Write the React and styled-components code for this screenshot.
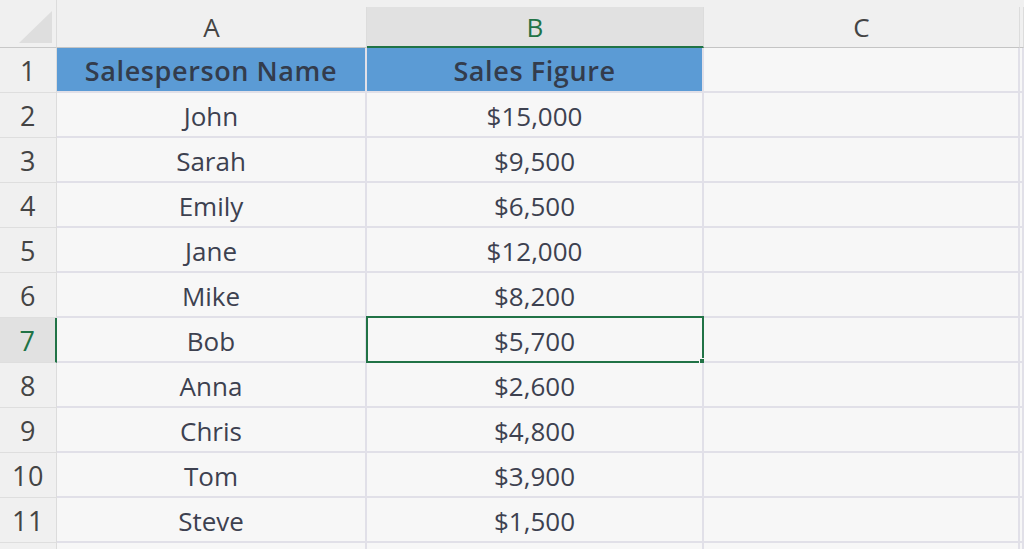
import React from 'react';
import styled, { createGlobalStyle } from 'styled-components';

const Global = createGlobalStyle`
  html, body {
    margin: 0;
    padding: 0;
    background: #f0f0f0;
  }
  body {
    font-family: "Open Sans", "Noto Sans", "Liberation Sans", sans-serif;
  }
`;

const Sheet = styled.div`
  width: 1024px;
  height: 549px;
  overflow: hidden;
  background: #f0f0f0;
  padding-top: 7px;
  box-sizing: border-box;
`;

const Grid = styled.div`
  display: grid;
  grid-template-columns: 57px 310px 337px 316px 1fr;
  grid-auto-rows: 45px;
  grid-template-rows: 41px;
`;

const Corner = styled.div`
  position: relative;
  background: #f0f0f0;
  border-right: 1px solid #dcdcdc;
  border-bottom: 1px solid #c8c8c8;
  margin-top: -7px;
  height: 48px;
  box-sizing: border-box;

  &::after {
    content: '';
    position: absolute;
    right: 4px;
    bottom: 4px;
    width: 0;
    height: 0;
    border-left: 33px solid transparent;
    border-bottom: 32px solid #dedede;
  }
`;

const ColHead = styled.div`
  display: flex;
  align-items: center;
  justify-content: center;
  box-sizing: border-box;
  font-size: 26px;
  background: ${p => (p.$active ? '#e1e1e1' : '#f0f0f0')};
  color: ${p => (p.$active ? '#217346' : '#444444')};
  border-right: 1px solid #dcdcdc;
  border-bottom: ${p => (p.$active ? '2px solid #217346' : '1px solid #c4c4c4')};
  padding-top: ${p => (p.$active ? '1px' : '0')};
`;

const RowHead = styled.div`
  display: flex;
  align-items: center;
  justify-content: center;
  box-sizing: border-box;
  font-size: 27px;
  letter-spacing: 0.5px;
  background: ${p => (p.$active ? '#e1e1e1' : '#f0f0f0')};
  color: ${p => (p.$active ? '#217346' : '#444444')};
  border-right: ${p => (p.$active ? '2px solid #217346' : '1px solid #dcdcdc')};
  border-bottom: 1px solid #dedede;
`;

const Cell = styled.div`
  position: relative;
  display: flex;
  align-items: center;
  justify-content: center;
  box-sizing: border-box;
  font-size: ${p => (p.$head ? '27px' : '26px')};
  font-weight: ${p => (p.$head ? 600 : 400)};
  letter-spacing: ${p => (p.$head ? '0.6px' : '0')};
  background: ${p => (p.$head ? '#5b9bd5' : '#f7f7f7')};
  color: ${p => (p.$head ? '#333c4c' : '#3d4150')};
  border-right: 2px solid #e1e0e8;
  border-bottom: 2px solid #e1e0e8;
  padding-top: 2px;
`;

const Selection = styled.div`
  position: absolute;
  left: -1px;
  top: -2px;
  right: -2px;
  bottom: -2px;
  border: 2px solid #217346;
  pointer-events: none;

  &::after {
    content: '';
    position: absolute;
    right: -4px;
    bottom: -4px;
    width: 5px;
    height: 5px;
    background: #217346;
    border: 1px solid #f7f7f7;
  }
`;

const rows = [
  ['Salesperson Name', 'Sales Figure'],
  ['John', '$15,000'],
  ['Sarah', '$9,500'],
  ['Emily', '$6,500'],
  ['Jane', '$12,000'],
  ['Mike', '$8,200'],
  ['Bob', '$5,700'],
  ['Anna', '$2,600'],
  ['Chris', '$4,800'],
  ['Tom', '$3,900'],
  ['Steve', '$1,500'],
];

const App = () => {
  return (
    <Sheet>
      <Global />
      <Grid>
        <Corner />
        <ColHead>A</ColHead>
        <ColHead $active>B</ColHead>
        <ColHead>C</ColHead>
        <ColHead />
        {rows.map((r, i) => {
          const n = i + 1;
          const active = n === 7;
          return (
            <React.Fragment key={n}>
              <RowHead $active={active}>{n}</RowHead>
              <Cell $head={n === 1}>{r[0]}</Cell>
              <Cell $head={n === 1}>
                {r[1]}
                {active && <Selection />}
              </Cell>
              <Cell />
              <Cell />
            </React.Fragment>
          );
        })}
        {/* next row, only its top edge shows */}
        <RowHead />
        <Cell />
        <Cell />
        <Cell />
        <Cell />
      </Grid>
    </Sheet>
  );
};

export default App;
